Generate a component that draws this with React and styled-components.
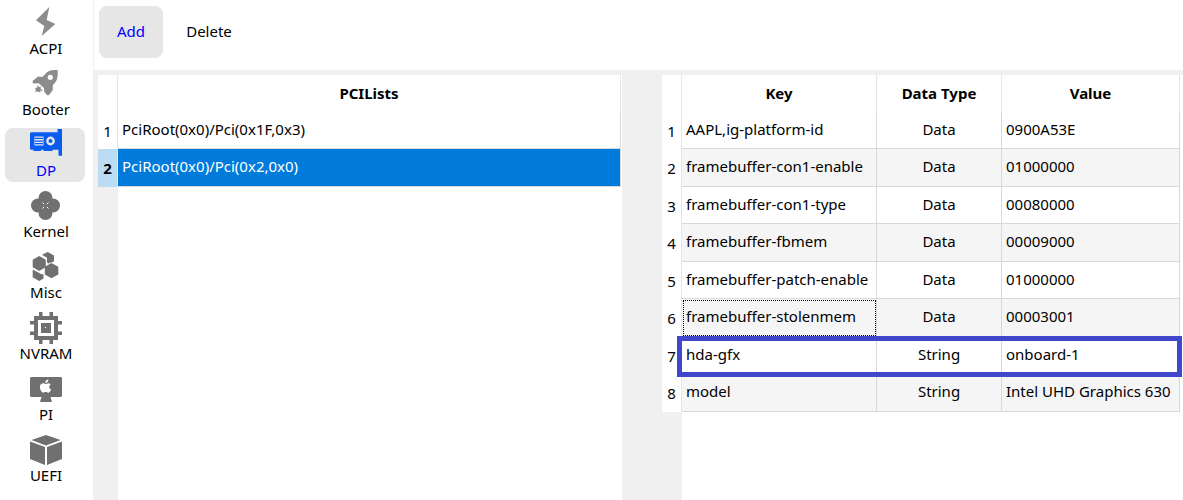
import React, { useState } from 'react';
import styled, { createGlobalStyle } from 'styled-components';

const GlobalStyle = createGlobalStyle`
    body {
        margin: 0;
        background: #fff;
        color: #000;
        font-family: 'Noto Sans', 'Open Sans', sans-serif;
        font-size: 15px;
        line-height: 20px;
    }
`;

// Styled Components
const Window = styled.div`
    display: flex;
    min-height: 100vh;
`;

const Sidebar = styled.nav`
    box-sizing: border-box;
    flex: none;
    display: flex;
    flex-direction: column;
    gap: 7px;
    width: 94px;
    padding: 6px 8px 6px 5px;
    border-right: 1px solid #efefef;
`;

const NavButton = styled.button`
    display: flex;
    flex-direction: column;
    align-items: center;
    height: 54px;
    padding: 1px 0 0 2px;
    border: 0;
    border-radius: 8px;
    background: ${({ $active }) => ($active ? '#e6e6e6' : 'transparent')};
    color: ${({ $active }) => ($active ? '#00f' : '#000')};
    font: inherit;
    line-height: 18px;
    cursor: pointer;
`;

const Icon = styled.svg`
    flex: none;
    width: 32px;
    height: 32px;
    fill: ${({ $color }) => $color};
`;

const Main = styled.main`
    flex: 1;
    display: flex;
    flex-direction: column;
    min-width: 0;
    background: #f0f0f0;
`;

const Toolbar = styled.div`
    display: flex;
    gap: 14px;
    padding: 6px 5px 12px;
    background: #fff;
`;

const ToolButton = styled.button`
    height: 52px;
    min-width: 64px;
    padding: 0 8px 2px;
    border: 0;
    border-radius: 8px;
    background: ${({ $active }) => ($active ? '#e6e6e6' : 'transparent')};
    color: ${({ $active }) => ($active ? '#00f' : '#000')};
    font: inherit;
    cursor: pointer;
`;

const Panels = styled.div`
    flex: 1;
    display: grid;
    grid-template-columns: 524fr 521fr;
    gap: 40px;
    padding: 5px 0 0 4px;
`;

const Panel = styled.section`
    background: linear-gradient(to right, #f0f0f0 20px, #fff 20px);
`;

const Table = styled.table`
    width: calc(100% - ${({ $inset }) => $inset}px);
    border-collapse: separate;
    border-spacing: 0;
    table-layout: fixed;
    background: #fff;
`;

const HeadCell = styled.th`
    box-sizing: border-box;
    width: ${({ $width }) => $width || 'auto'};
    height: 37px;
    padding: 0 0 2px;
    border-right: 1px solid #e5e5e5;
    font-weight: 700;
`;

const IndexCell = styled.th`
    box-sizing: border-box;
    padding: 9px 0 0;
    border-right: 1px solid #e5e5e5;
    background: ${({ $selected }) => ($selected ? '#bcdcf4' : '#fff')};
    font-weight: ${({ $selected }) => ($selected ? 700 : 400)};
    text-align: center;
    vertical-align: top;
`;

const Cell = styled.td`
    box-sizing: border-box;
    padding: 7px 4px 0;
    border-right: 1px solid #d8d8d8;
    border-bottom: 1px solid #d8d8d8;
    text-align: ${({ $center }) => ($center ? 'center' : 'left')};
    vertical-align: top;
    white-space: nowrap;
    outline: ${({ $focused }) => ($focused ? '1px dotted #000' : 'none')};
    outline-offset: -2px;
`;

const Row = styled.tr`
    position: relative;
    height: 37px;

    &:nth-child(even) {
        height: 38px;
    }

    &:nth-child(even) ${Cell} {
        background: #f5f5f5;
    }

    && ${Cell} {
        ${({ $selected }) => $selected && 'background: #007bdc; color: #fff;'}
    }
`;

const Marker = styled.span`
    position: absolute;
    z-index: 1;
    top: -1px;
    right: -2px;
    bottom: -3px;
    left: 15px;
    border: 5px solid #3f48cc;
    pointer-events: none;
`;

const navItems = [
    {
        name: 'ACPI',
        color: '#8c8c8c',
        icon: <path d="M19.300 0 16.700 13l8.600 4L11.700 29l2.600-10L6 13.300z" />,
    },
    {
        name: 'Booter',
        color: '#8c8c8c',
        icon: (
            <>
                <path
                    fillRule="evenodd"
                    d="M27.7 2.2C22 1.8 17.500 2.800 14.500 7l-2.500 2-4-.5-5.700 4.700 1 2.300 5.400-.2 5.300 4.600.3 4 3 3.300 1.500.1 4-5.300V17c4.600-4 5.200-8 4.900-14.800zM20.300 6.700a2.600 2.600 0 1 1 0 5.200 2.600 2.600 0 0 1 0-5.200z"
                />
                <path d="m7 17 2 2 2-.5-.5 2 2.500 2.500-3-.5.5 2-3-1-2.500.5 1-2L5 20l2.500-.5z" />
            </>
        ),
    },
    {
        name: 'DP',
        color: '#0a5cf0',
        icon: (
            <>
                <path d="M1 3.300h26.500V0H32v26.700h-3.500v-6H22.500V22h-9v-1.300H11V22H3.500v-1.300H1l-1-1V4.300z" />
                <path d="M4.500 7.500h9v9h-9z" fill="#e6e6e6" />
                <path d="M5 8.700h8V10H5zM5 11.400h8v1.300H5zM5 14h8v1.300H5z" />
                <circle cx="20.500" cy="12" r="3.200" stroke="#e6e6e6" strokeWidth="2.400" />
            </>
        ),
    },
    {
        name: 'Kernel',
        color: '#707070',
        icon: (
            <>
                <circle cx="15.500" cy="8" r="7" />
                <circle cx="8" cy="15.500" r="7" />
                <circle cx="23" cy="15.500" r="7" />
                <circle cx="15.500" cy="23" r="7" />
                <path d="m12.500 12.500 6 6M18.500 12.500l-6 6" stroke="#fff" />
                <circle cx="15.500" cy="15.500" r="1.800" />
            </>
        ),
    },
    {
        name: 'Misc',
        color: '#707070',
        icon: (
            <>
                <path d="m9.200 5 6.600 3.800v7.400L9.200 20l-6.500-3.800V8.800z" />
                <path d="m21.500 12 6.800 3.800v7.700l-6.800 3.800-6.700-3.800v-7.700z" />
                <path d="m12 3.800 5.700-2.800L24 4.500v6l-3 1-2.500 1-1.500-1V6.800z" />
                <path d="m2.700 18.500 6.500 3.500 1.800 1 2.500.5v4l-4.300 2.500-6.500-3.700z" />
            </>
        ),
    },
    {
        name: 'NVRAM',
        color: '#707070',
        icon: (
            <path
                fillRule="evenodd"
                d="M9 0h3.500v4h7V0H23v4h5v5h4v3.500h-4v7h4V23h-4v5h-5v4h-3.500v-4h-7v4H9v-4H4v-5H0v-3.500h4v-7H0V9h4V4h5zM8 8v16h16V8zm3 3h10v10H11zm4 4v1h1v-1z"
            />
        ),
    },
    {
        name: 'PI',
        color: '#707070',
        icon: (
            <>
                <path d="M1 4h30l1 1v18l-1 1H20.500l1.500 5H10l1.500-5H1l-1-1V5z" />
                <path
                    fill="#fff"
                    d="M18.300 6.500c.2 2-1.200 3.500-3 3.500-.2-1.900 1.300-3.400 3-3.500zM15.500 11c1 0 2-.9 3-.8 1.100.1 1.800.6 2.200 1.200-2.200 1.500-1.800 4.200.4 5-.6 1.700-1.700 3.300-2.900 3.300-1 0-1.500-.6-2.600-.6s-1.600.6-2.500.6c-2.900-.5-5.500-9.400.2-9.400.9 0 1.500.7 2.200.7z"
                />
            </>
        ),
    },
    {
        name: 'UEFI',
        color: '#707070',
        icon: <path d="M16 1 30.500 6 16 11.500 1.500 6zM0 7.500l15 5.500v18L0 25zM32 7.500 17 13v18l15-6z" />,
    },
];

const pciLists = ['PciRoot(0x0)/Pci(0x1F,0x3)', 'PciRoot(0x0)/Pci(0x2,0x0)'];

const properties = [
    { key: 'AAPL,ig-platform-id', type: 'Data', value: '0900A53E' },
    { key: 'framebuffer-con1-enable', type: 'Data', value: '01000000' },
    { key: 'framebuffer-con1-type', type: 'Data', value: '00080000' },
    { key: 'framebuffer-fbmem', type: 'Data', value: '00009000' },
    { key: 'framebuffer-patch-enable', type: 'Data', value: '01000000' },
    { key: 'framebuffer-stolenmem', type: 'Data', value: '00003001', focused: true },
    { key: 'hda-gfx', type: 'String', value: 'onboard-1', marked: true },
    { key: 'model', type: 'String', value: 'Intel UHD Graphics 630' },
];

// Main Component
const App = () => {
    const [page, setPage] = useState('DP');
    const [selected, setSelected] = useState(1);

    return (
        <Window>
            <GlobalStyle />
            <Sidebar>
                {navItems.map((item) => (
                    <NavButton key={item.name} $active={item.name === page} onClick={() => setPage(item.name)}>
                        <Icon viewBox="0 0 32 32" $color={item.color} aria-hidden="true">
                            {item.icon}
                        </Icon>
                        {item.name}
                    </NavButton>
                ))}
            </Sidebar>

            <Main>
                <Toolbar>
                    <ToolButton $active>Add</ToolButton>
                    <ToolButton>Delete</ToolButton>
                </Toolbar>

                <Panels>
                    <Panel>
                        <Table $inset={1}>
                            <thead>
                                <tr>
                                    <HeadCell $width="20px" />
                                    <HeadCell>PCILists</HeadCell>
                                </tr>
                            </thead>
                            <tbody>
                                {pciLists.map((path, index) => (
                                    <Row key={path} $selected={index === selected} onClick={() => setSelected(index)}>
                                        <IndexCell $selected={index === selected}>{index + 1}</IndexCell>
                                        <Cell>{path}</Cell>
                                    </Row>
                                ))}
                            </tbody>
                        </Table>
                    </Panel>

                    <Panel>
                        <Table $inset={3}>
                            <thead>
                                <tr>
                                    <HeadCell $width="20px" />
                                    <HeadCell>Key</HeadCell>
                                    <HeadCell $width="125px">Data Type</HeadCell>
                                    <HeadCell $width="178px">Value</HeadCell>
                                </tr>
                            </thead>
                            <tbody>
                                {properties.map((item, index) => (
                                    <Row key={item.key}>
                                        <IndexCell>
                                            {index + 1}
                                            {item.marked && <Marker />}
                                        </IndexCell>
                                        <Cell $focused={item.focused}>{item.key}</Cell>
                                        <Cell $center>{item.type}</Cell>
                                        <Cell>{item.value}</Cell>
                                    </Row>
                                ))}
                            </tbody>
                        </Table>
                    </Panel>
                </Panels>
            </Main>
        </Window>
    );
};

export default App;
